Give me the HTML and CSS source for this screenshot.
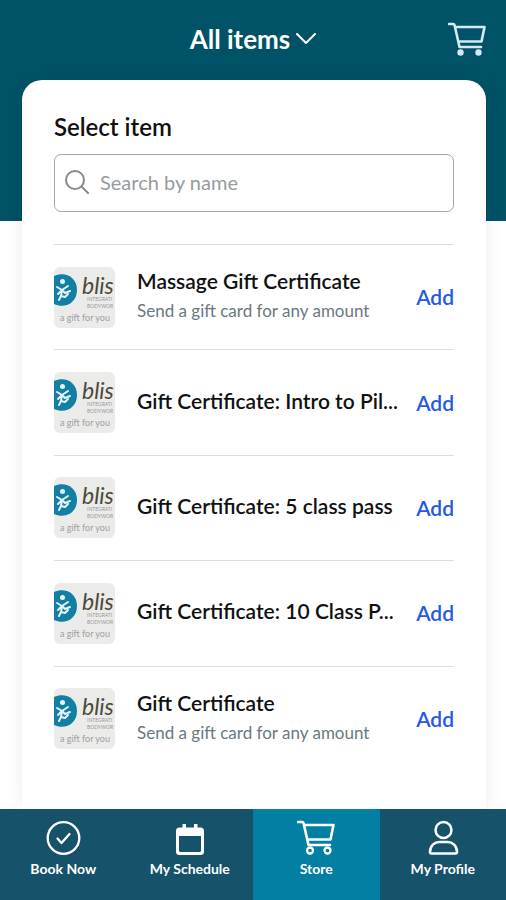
FILE: index.html
```html
<!DOCTYPE html>
<html lang="en">
<head>
<meta charset="utf-8">
<meta name="viewport" content="width=device-width, initial-scale=1">
<title>Store</title>
<link rel="stylesheet" href="styles.css">
</head>
<body>
<svg class="sprite" aria-hidden="true">
  <symbol id="cart" viewBox="0 0 38 34">
    <path d="M1 2h4q1.300 0 1.600 1.200L11.500 25H33M7.500 5H36.500L33.500 19.500H10.500" fill="none" stroke="currentColor" stroke-width="2.600" stroke-linecap="round" stroke-linejoin="round"/>
  </symbol>
  <symbol id="thumb" viewBox="0 0 61 61">
    <rect width="61" height="61" fill="#ebebea"/>
    <path d="M0 9C11 4 23 10 23 23S11 42 0 37z" fill="#137fa3"/>
    <g fill="none" stroke="#e4f4f8" stroke-width="2" stroke-linecap="round" stroke-linejoin="round">
      <circle cx="8.500" cy="14.500" r="2.500" fill="#e4f4f8" stroke="none"/>
      <path d="M3 20l5 3 6-4M4 27l4-4 3 3 5-2M5 33l2-4 4 1 3-3M8 23l-1 6"/>
    </g>
    <text class="thumb-logo" x="28" y="27">blis</text>
    <text class="thumb-small" x="33" y="34">INTEGRATI</text>
    <text class="thumb-small" x="33" y="41">BODYWOR</text>
    <text class="thumb-gift" x="6" y="54">a gift for you</text>
  </symbol>
</svg>
<div class="app">
  <header class="topbar">
    <button class="filter" type="button">All items
      <svg class="chevron" viewBox="0 0 20 12" aria-hidden="true"><path d="M1 1l9 9 9-9" fill="none" stroke="currentColor" stroke-width="2" stroke-linecap="round" stroke-linejoin="round"/></svg>
    </button>
    <button class="cart-button" type="button" aria-label="Cart">
      <svg class="cart-icon" viewBox="0 0 38 34" aria-hidden="true"><use href="#cart"/><circle cx="12.500" cy="30.500" r="3.200" fill="currentColor"/><circle cx="30.500" cy="30.500" r="3.200" fill="currentColor"/></svg>
    </button>
  </header>
  <main class="card">
    <label class="title" for="search">Select item</label>
    <div class="search">
      <svg class="search-icon" viewBox="0 0 24 24" aria-hidden="true"><path d="M16.500 16.500L23 23M19 10a9 9 0 1 1-18 0a9 9 0 0 1 18 0z" fill="none" stroke="currentColor" stroke-width="2" stroke-linecap="round"/></svg>
      <input class="search-input" id="search" type="search" placeholder="Search by name">
    </div>
    <ul class="list">
      <li class="item">
        <svg class="thumb" aria-hidden="true"><use href="#thumb"/></svg>
        <div class="info"><h2 class="name">Massage Gift Certificate</h2><p class="note">Send a gift card for any amount</p></div>
        <button class="add" type="button">Add</button>
      </li>
      <li class="item">
        <svg class="thumb" aria-hidden="true"><use href="#thumb"/></svg>
        <div class="info"><h2 class="name">Gift Certificate: Intro to Pil...</h2></div>
        <button class="add" type="button">Add</button>
      </li>
      <li class="item">
        <svg class="thumb" aria-hidden="true"><use href="#thumb"/></svg>
        <div class="info"><h2 class="name">Gift Certificate: 5 class pass</h2></div>
        <button class="add" type="button">Add</button>
      </li>
      <li class="item">
        <svg class="thumb" aria-hidden="true"><use href="#thumb"/></svg>
        <div class="info"><h2 class="name">Gift Certificate: 10 Class P...</h2></div>
        <button class="add" type="button">Add</button>
      </li>
      <li class="item">
        <svg class="thumb" aria-hidden="true"><use href="#thumb"/></svg>
        <div class="info"><h2 class="name">Gift Certificate</h2><p class="note">Send a gift card for any amount</p></div>
        <button class="add" type="button">Add</button>
      </li>
    </ul>
  </main>
  <nav class="tabs">
    <a class="tab" href="#book">
      <svg class="tab-icon" viewBox="0 0 38 36" aria-hidden="true"><g fill="none" stroke="currentColor" stroke-width="2.300" stroke-linecap="round" stroke-linejoin="round"><circle cx="19.500" cy="18" r="15.800"/><path d="M13.500 18.500l4 4.500 8-9"/></g></svg>
      Book Now</a>
    <a class="tab" href="#schedule">
      <svg class="tab-icon" viewBox="0 0 38 36" aria-hidden="true"><path fill="currentColor" fill-rule="evenodd" d="M11.500 4h3.500v3.500h8V4h3.500v3.500h3Q33 7.500 33 11v20.500q0 3.500-3.500 3.500h-21Q5 35 5 31.500V11Q5 7.500 8.500 7.500h3zM8 16v14.500Q8 32 9.500 32h19q1.500 0 1.500-1.500V16z"/></svg>
      My Schedule</a>
    <a class="tab active" href="#store" aria-current="page">
      <svg class="tab-icon" viewBox="0 0 38 36" aria-hidden="true"><use href="#cart" y="0" width="38" height="34"/><g fill="none" stroke="currentColor" stroke-width="2.300"><circle cx="13" cy="30.500" r="3"/><circle cx="30.500" cy="30.500" r="3"/></g></svg>
      Store</a>
    <a class="tab" href="#profile">
      <svg class="tab-icon" viewBox="0 0 38 36" aria-hidden="true"><g fill="none" stroke="currentColor" stroke-width="2.500" stroke-linejoin="round"><circle cx="19.500" cy="10" r="8"/><path d="M6 32C6 25.500 10.500 22 15.500 22h8c5 0 9.500 3.500 9.500 10q0 1.500-1.500 1.500h-24Q6 33.500 6 32z"/></g></svg>
      My Profile</a>
  </nav>
</div>
</body>
</html>
```
FILE: styles.css
```css
* {
  box-sizing: border-box;
}

body {
  margin: 0;
  color: #111;
  font-family: Lato, "Noto Sans", sans-serif;
}

button {
  padding: 0;
  border: 0;
  background: none;
  font: inherit;
  cursor: pointer;
}

.sprite {
  position: absolute;
  width: 0;
  height: 0;
}

.app {
  display: flex;
  flex-direction: column;
  min-height: 100vh;
  background: linear-gradient(#005267 221px, #fff 221px);
}

.topbar {
  display: grid;
  grid-template-columns: 1fr auto 1fr;
  align-items: center;
  height: 80px;
  padding: 0 20px 2px;
  color: #fff;
}

.filter {
  grid-column: 2;
  display: flex;
  align-items: center;
  gap: 6px;
  color: #fff;
  font-size: 26px;
  font-weight: 700;
  line-height: 32px;
}

.chevron {
  width: 20px;
  height: 12px;
}

.cart-button {
  justify-self: end;
  color: #d5e9f0;
}

.cart-icon {
  display: block;
  width: 38px;
  height: 34px;
}

.card {
  flex: 1;
  display: flex;
  flex-direction: column;
  margin: 0 20px 0 22px;
  padding: 32px 32px 38px;
  border-radius: 20px 20px 0 0;
  background: #fff;
  box-shadow: 0 0 18px rgba(0, 0, 0, 0.08);
}

.title {
  font-size: 24px;
  font-weight: 600;
  line-height: 30px;
}

.search {
  display: flex;
  align-items: center;
  gap: 11px;
  height: 58px;
  margin: 12px 0 32px;
  padding: 0 10px 2px;
  border: 1px solid #a3a8a8;
  border-radius: 7px;
}

.search-icon {
  flex: none;
  width: 24px;
  height: 24px;
  color: #858b8e;
}

.search-input {
  flex: 1;
  min-width: 0;
  padding: 0;
  border: 0;
  outline: 0;
  background: none;
  color: #111;
  font: inherit;
  font-size: 20px;
  line-height: 28px;
}

.search-input::placeholder {
  color: #969b9f;
  opacity: 1;
}

.list {
  flex: 1;
  display: grid;
  grid-auto-rows: 1fr;
  margin: 0;
  padding: 0;
  list-style: none;
}

.item {
  display: flex;
  align-items: center;
  border-top: 1px solid #dedede;
}

.thumb {
  flex: none;
  width: 61px;
  height: 61px;
  margin-right: 22px;
  border-radius: 6px;
}

.thumb-logo {
  fill: #4d4a3b;
  font: italic 23px Lato, sans-serif;
}

.thumb-small {
  fill: #999;
  font: 5px Lato, sans-serif;
}

.thumb-gift {
  fill: #a0a0a0;
  font: 9px Lato, sans-serif;
}

.info {
  flex: 1;
  min-width: 0;
  padding-bottom: 4px;
}

.name {
  margin: 0;
  font-size: 21px;
  font-weight: 600;
  line-height: 32px;
  white-space: nowrap;
}

.note {
  margin: 0;
  color: #69797f;
  font-size: 17px;
  line-height: 28px;
}

.add {
  color: #2459e0;
  font-size: 21px;
  font-weight: 600;
  line-height: 32px;
}

.tabs {
  position: sticky;
  bottom: 0;
  display: grid;
  grid-template-columns: repeat(4, 1fr);
  height: 91px;
  background: #16526a;
}

.tab {
  display: flex;
  flex-direction: column;
  align-items: center;
  gap: 4px;
  padding-top: 11px;
  color: #fff;
  font-size: 14px;
  font-weight: 700;
  line-height: 18px;
  text-decoration: none;
}

.active {
  background: #027fa3;
}

.tab-icon {
  width: 38px;
  height: 36px;
}
```
